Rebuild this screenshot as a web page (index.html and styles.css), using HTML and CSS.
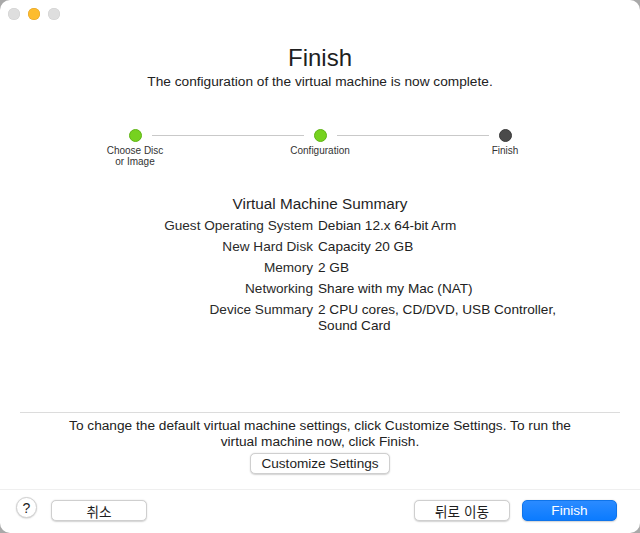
FILE: index.html
```html
<!DOCTYPE html>
<html lang="ko">
<head>
	<meta charset="UTF-8">
	<title>Finish</title>
	<link rel="stylesheet" href="styles.css">
</head>
<body>
<div class="window">
	<div class="titlebar">
		<span class="light"></span>
		<span class="light yellow"></span>
		<span class="light"></span>
	</div>

	<div class="content">
		<h1>Finish</h1>
		<p class="subtitle">The configuration of the virtual machine is now complete.</p>

		<div class="track">
			<div class="step">
				<span class="dot done"></span>
				<span class="step-label">Choose Disc<br>or Image</span>
			</div>
			<span class="line"></span>
			<div class="step">
				<span class="dot done"></span>
				<span class="step-label">Configuration</span>
			</div>
			<span class="line"></span>
			<div class="step">
				<span class="dot current"></span>
				<span class="step-label">Finish</span>
			</div>
		</div>

		<h2>Virtual Machine Summary</h2>
		<div class="summary">
			<span class="key">Guest Operating System</span>
			<span class="val">Debian 12.x 64-bit Arm</span>
			<span class="key">New Hard Disk</span>
			<span class="val">Capacity 20 GB</span>
			<span class="key">Memory</span>
			<span class="val">2 GB</span>
			<span class="key">Networking</span>
			<span class="val">Share with my Mac (NAT)</span>
			<span class="key">Device Summary</span>
			<span class="val">2 CPU cores, CD/DVD, USB Controller, Sound Card</span>
		</div>
	</div>

	<div class="notice">
		<p>To change the default virtual machine settings, click Customize Settings. To run the virtual machine now, click Finish.</p>
		<button type="button" class="btn">Customize Settings</button>
	</div>

	<div class="footer">
		<button type="button" class="help">?</button>
		<button type="button" class="btn wide">취소</button>
		<span class="spacer"></span>
		<button type="button" class="btn wide">뒤로 이동</button>
		<button type="button" class="btn wide primary">Finish</button>
	</div>
</div>
</body>
</html>
```

FILE: styles.css
```css
html{
	background: #a9a9a9;
}

body{
	margin: 0;
	font-family: "Liberation Sans", "Noto Sans CJK KR", sans-serif;
	color: #222;
}

.window{
	height: 533px;
	background: #ffffff;
	border-radius: 10px;
	display: flex;
	flex-direction: column;
	overflow: hidden;
}

/* traffic lights */
.titlebar{
	height: 28px;
	display: flex;
	gap: 8px;
	padding: 8px 0 0 8px;
	box-sizing: border-box;
}

.light{
	width: 12px;
	height: 12px;
	border-radius: 50%;
	background: #dedede;
	box-shadow: inset 0 0 0 0.5px #cfcfcf;
}

.light.yellow{
	background: #fdbc2e;
	box-shadow: inset 0 0 0 0.5px #e1a127;
}

.content{
	flex: 1;
	text-align: center;
}

h1{
	margin: 15px 0 0;
	font-size: 24px;
	line-height: 30px;
	font-weight: 400;
	color: #1f1f1f;
}

.subtitle{
	margin: 0;
	font-size: 13.7px;
	line-height: 17px;
}

/* progress steps */
.track{
	width: 383px;
	margin: 39px auto 0;
	display: flex;
	align-items: flex-start;
}

.step{
	width: 13px;
	display: flex;
	flex-direction: column;
	align-items: center;
}

.dot{
	width: 13px;
	height: 13px;
	border-radius: 50%;
	box-sizing: border-box;
}

.dot.done{
	background: #76d21f;
	border: 1px solid #5fb415;
}

.dot.current{
	background: #4a4a4a;
	border: 1px solid #3a3a3a;
}

.step-label{
	margin-top: 3px;
	font-size: 10px;
	line-height: 11px;
	white-space: nowrap;
	color: #333;
}

.line{
	flex: 1;
	height: 1px;
	margin: 6px 10px 0;
	background: #c9c9c9;
}

h2{
	margin: 28px 0 5px;
	font-size: 15.3px;
	line-height: 18px;
	font-weight: 400;
	color: #1f1f1f;
}

.summary{
	display: grid;
	grid-template-columns: 313px 1fr;
	column-gap: 5px;
	row-gap: 5px;
	font-size: 13.6px;
	line-height: 16px;
	text-align: left;
}

.key{
	text-align: right;
	color: #2a2a2a;
}

.val{
	max-width: 240px;
}

/* lower section */
.notice{
	margin: 0 20px;
	border-top: 1px solid #dcdcdc;
	padding: 5px 0 15px;
	text-align: center;
}

.notice p{
	margin: 0 auto 3px;
	max-width: 520px;
	font-size: 13.7px;
	line-height: 16px;
}

.btn{
	height: 21px;
	padding: 0 10px;
	font-family: inherit;
	font-size: 13.6px;
	color: #1e1e1e;
	background: #ffffff;
	border: 0.5px solid #cfcfcf;
	border-radius: 5px;
	box-shadow: 0 0.5px 1.5px rgba(0, 0, 0, 0.18);
	cursor: pointer;
}

.footer{
	border-top: 1px solid #efefef;
	height: 44px;
	box-sizing: border-box;
	padding: 10px 23px 0 16px;
	display: flex;
	align-items: flex-start;
	gap: 12px;
}

.help{
	width: 21px;
	height: 21px;
	margin: -3px 2px 0 0;
	padding: 0;
	border-radius: 50%;
	border: 0.5px solid #d0d0d0;
	background: #fff;
	box-shadow: 0 0.5px 1.5px rgba(0, 0, 0, 0.2);
	font-family: inherit;
	font-size: 14px;
	color: #222;
}

.wide{
	width: 96px;
}

.spacer{
	flex: 1;
}

.primary{
	width: 95px;
	background: linear-gradient(#2b8bff, #0b7bff);
	border-color: #0f74ea;
	color: #ffffff;
}
```
